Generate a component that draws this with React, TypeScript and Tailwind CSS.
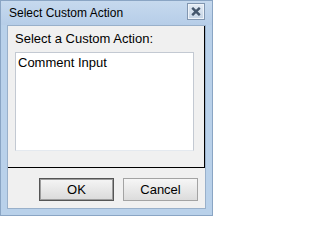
import React from "react"

const font = { fontFamily: '"Liberation Sans", Arial, sans-serif' }

function CloseGlyph() {
  return (
    <svg width="10" height="9" viewBox="0 0 10 9" aria-hidden>
      <path d="M1.2 0.8 L8.8 8.2 M8.8 0.8 L1.2 8.2" stroke="#44566c" strokeWidth="2.4" fill="none" />
    </svg>
  )
}

export default function App() {
  return (
    <div
      className="flex h-[216px] w-[213px] flex-col border border-[#8aa5c4] bg-[#b9d1ea] text-black"
      style={font}
    >
      <div className="flex h-[24px] items-center bg-gradient-to-b from-[#c6d9ee] to-[#b6cde8] pl-[8px] pr-[7px]">
        <span className="text-[12px] leading-[14px]">Select Custom Action</span>
        <span className="ml-auto mb-[3px] grid h-[17px] w-[18px] place-items-center border border-[#8196b0] bg-gradient-to-b from-[#e4ecf5] to-[#c5d4e5] shadow-[inset_0_0_0_1px_#eef3f9]">
          <CloseGlyph />
        </span>
      </div>

      <div className="mx-[6px] mb-[6px] flex flex-1 flex-col border border-[#99b0ca] bg-[#f0f0f0]">
        <div className="flex h-[142px] flex-col border-b border-r border-black pl-[7px] pr-[10px] pt-[5px]">
          <p className="text-[13px] leading-[15px]">Select a Custom Action:</p>
          <div className="mt-[6px] h-[99px] border border-[#c3c9d2] border-b-[#e4e9ef] bg-white pl-[2px] pt-[2px]">
            <p className="text-[13px] leading-[15px]">Comment Input</p>
          </div>
        </div>

        <div className="mt-[10px] flex justify-end gap-[9px] pr-[7px]">
          <button className="h-[23px] w-[75px] border border-[#555555] bg-gradient-to-b from-[#f5f5f5] to-[#dadada] text-[13px] leading-[15px] shadow-[inset_0_0_0_1px_#9c9c9c]">
            OK
          </button>
          <button className="h-[23px] w-[75px] border border-[#a3a3a3] bg-gradient-to-b from-[#f6f6f6] to-[#dcdcdc] text-[13px] leading-[15px]">
            Cancel
          </button>
        </div>
      </div>
    </div>
  )
}
